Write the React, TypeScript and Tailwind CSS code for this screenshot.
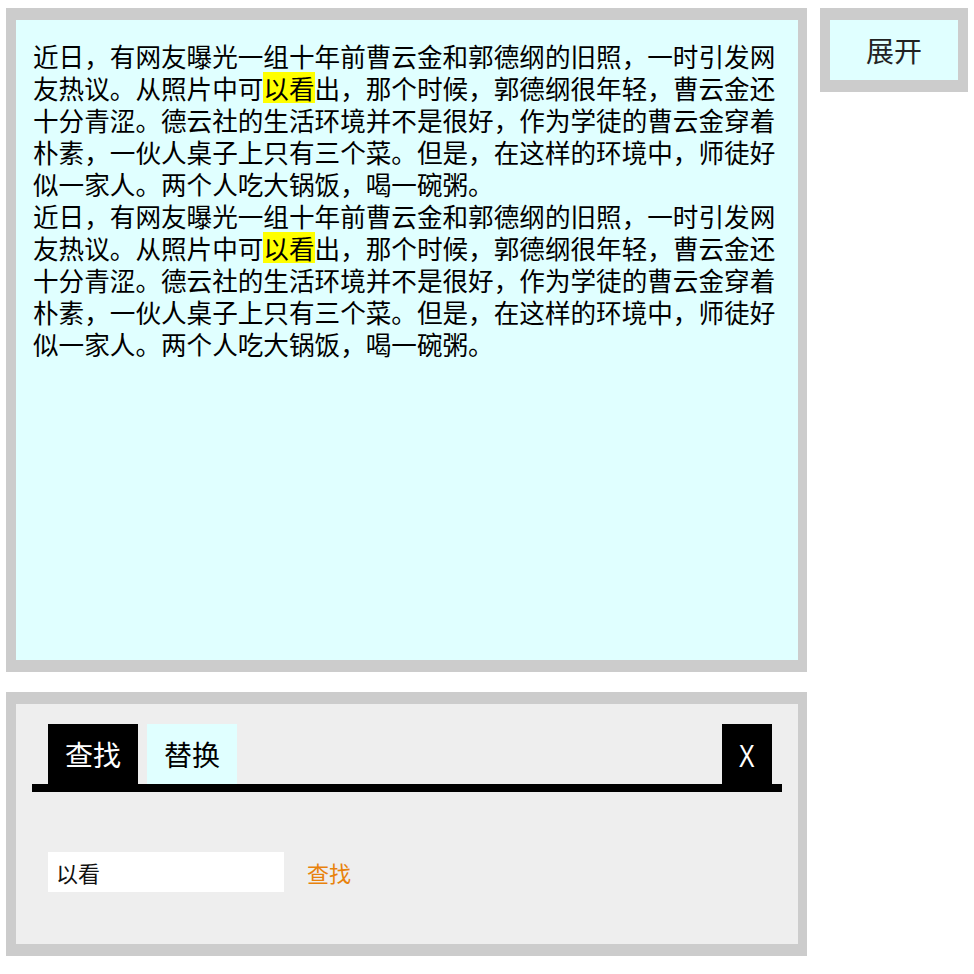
import { useState } from "react";

const paragraph =
  "近日，有网友曝光一组十年前曹云金和郭德纲的旧照，一时引发网友热议。从照片中可|以看|出，那个时候，郭德纲很年轻，曹云金还十分青涩。德云社的生活环境并不是很好，作为学徒的曹云金穿着朴素，一伙人桌子上只有三个菜。但是，在这样的环境中，师徒好似一家人。两个人吃大锅饭，喝一碗粥。";

function Paragraph() {
  const [before, hit, after] = paragraph.split("|");
  return (
    <p>
      {before}
      <span className="bg-[#ffff00] inline-block leading-[31px]">{hit}</span>
      {after}
    </p>
  );
}

export default function App() {
  const [query, setQuery] = useState("以看");
  const [tab, setTab] = useState("find");

  return (
    <div
      className="min-h-screen bg-white pl-[6px] pt-[8px] text-black"
      style={{ fontFamily: '"Noto Sans CJK SC", "Noto Sans", sans-serif' }}
    >
      <div className="flex items-start gap-[13px]">
        {/* Text panel */}
        <div className="w-[801px] h-[664px] border-l-[10px] border-r-[9px] border-y-[12px] border-[#cccccc] bg-[#e0ffff] pl-[17px] pr-[10px] pt-[20px] text-[25.6px] leading-[32px]">
          <Paragraph />
          <Paragraph />
        </div>

        {/* Expand button */}
        <button className="w-[148px] h-[84px] border-x-[10px] border-y-[12px] border-[#cccccc] bg-[#e0ffff] text-[28px] leading-none text-[#222]">
          展开
        </button>
      </div>

      {/* Find / replace panel */}
      <div className="mt-[20px] w-[801px] h-[264px] border-l-[10px] border-r-[9px] border-y-[12px] border-[#cccccc] bg-[#eeeeee] px-[16px] pt-[20px]">
        <div className="flex items-end border-b-[8px] border-black pl-[16px] pr-[10px]">
          <button
            onClick={() => setTab("find")}
            className={
              tab === "find"
                ? "w-[90px] h-[60px] bg-black text-white text-[28px] leading-none"
                : "w-[90px] h-[60px] bg-[#e0ffff] text-black text-[28px] leading-none"
            }
          >
            查找
          </button>
          <button
            onClick={() => setTab("replace")}
            className={
              tab === "replace"
                ? "ml-[9px] w-[90px] h-[60px] bg-black text-white text-[28px] leading-none"
                : "ml-[9px] w-[90px] h-[60px] bg-[#e0ffff] text-black text-[28px] leading-none"
            }
          >
            替换
          </button>
          <button className="ml-auto w-[50px] h-[60px] bg-black text-white text-[32px] leading-none">
            <span className="inline-block scale-x-75" style={{ fontFamily: '"Liberation Sans", sans-serif' }}>
              X
            </span>
          </button>
        </div>

        <div className="mt-[60px] flex items-center pl-[16px]">
          <input
            value={query}
            onChange={(e) => setQuery(e.target.value)}
            className="w-[236px] h-[40px] bg-white px-[8px] text-[22px] text-[#111] outline-none"
          />
          <button className="ml-[23px] text-[22px] text-[#e8820c]">查找</button>
        </div>
      </div>
    </div>
  );
}
